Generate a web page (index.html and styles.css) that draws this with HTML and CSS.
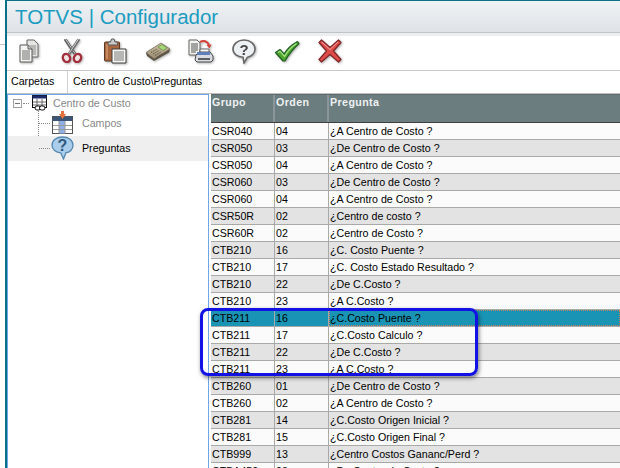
FILE: index.html
```html
<!DOCTYPE html>
<html lang="es">
<head>
<meta charset="utf-8">
<title>TOTVS | Configurador</title>
<link rel="stylesheet" href="styles.css">
</head>
<body>
<div class="desk">
  <div class="window">
    <header class="title">TOTVS | Configurador</header>
    <div class="toolbar">
      <svg class="tool" width="24" height="24" viewBox="0 0 24 24"><path d="M10 1h7l4 4v13H10z" fill="#e4e4e0" stroke="#6a6a6a"/><path d="M12 7h7M12 9h7M12 11h7M12 13h7M12 15h7" stroke="#8a8a8a"/><path d="M3 6h8l4 4v13H3z" fill="#f3f3ef" stroke="#5a5a5a"/><path d="M11 6v4h4" fill="#ccc" stroke="#5a5a5a"/><path d="M5 12h8M5 14h8M5 16h8M5 18h8M5 20h8" stroke="#6f6f6f"/></svg>
      <svg class="tool" width="24" height="24" viewBox="0 0 24 24"><path d="M5 0l10 15" stroke="#5c5c5c" stroke-width="3"/><path d="M5.500 0l9.500 14.500" stroke="#c8c8c8"/><path d="M19 0L9 15" stroke="#6a6a6a" stroke-width="3"/><path d="M18.500 0L9 14.500" stroke="#d0d0d0"/><ellipse cx="6.500" cy="19" rx="3.500" ry="4.200" fill="#f0e4e4" stroke="#a32f3c" stroke-width="2.400" transform="rotate(-25 6.500 19)"/><ellipse cx="17.500" cy="19" rx="3.500" ry="4.200" fill="#f0e4e4" stroke="#a32f3c" stroke-width="2.400" transform="rotate(25 17.500 19)"/></svg>
      <svg class="tool" width="24" height="26" viewBox="0 0 24 26"><rect x="1.500" y="4" width="15" height="19" rx="1" fill="#a9673f" stroke="#5a3823"/><path d="M3 6v15h2V6z" fill="#c58a60"/><path d="M5 5l1-1h1.500l1-3h2.500l1 3h1.500l1 1v2H5z" fill="#c9c9c9" stroke="#5a5a5a"/><path d="M9 11h14v14H9z" fill="#f7f7f3" stroke="#3f3f3f"/><path d="M11 14h10M11 16h10M11 18h10M11 20h10M11 22h10" stroke="#777"/></svg>
      <svg class="tool" width="26" height="24" viewBox="0 0 26 24"><defs><linearGradient id="cb" x1="0" y1="0" x2="0" y2="1"><stop offset="0" stop-color="#cfc4a4"/><stop offset="1" stop-color="#97886f"/></linearGradient></defs><path d="M1 14L16 5l9 6-1 2.500L9 22l-7-5z" fill="#5d5344"/><path d="M1 13.500L16 4l9 6L9 20z" fill="url(#cb)" stroke="#6b6151" stroke-width=".7"/><path d="M13 8l4-2.500 5 3.500-4 2.500z" fill="#a6d877" stroke="#5d7f44" stroke-width=".6"/><path d="M6 13.500l6-3.500M8 15l6-3.500M10 16.500l6-3.500M12 18l5-3" stroke="#5e5444" stroke-dasharray="1.500 1"/></svg>
      <svg class="tool" width="26" height="24" viewBox="0 0 26 24"><path d="M1 1h8l3 3v12H1z" fill="#f2f2ee" stroke="#666"/><path d="M3 5h7M3 7h7M3 9h7M3 11h7M3 13h5" stroke="#555"/><path d="M12 3c4-2 7-1 9 3" fill="none" stroke="#d4423a" stroke-width="2"/><path d="M18.500 6l5-.5-2 4z" fill="#d4423a"/><path d="M12 10h9v5h-9z" fill="#fff" stroke="#666"/><path d="M8 16l3-3h11l3 4v4l-2 2H9l-2-2z" fill="#d8dce2" stroke="#4a4a4a"/><path d="M9 13h13v3H9z" fill="#5f7fb8"/><path d="M10 20h12" stroke="#333" stroke-width="1.500"/></svg>
      <svg class="tool" width="24" height="25" viewBox="0 0 24 25"><path d="M12 1c6 0 11 3.800 11 9 0 4.500-3.600 7.600-7.500 8.200L12 24l-1-5.800C5.500 18 1 14.800 1 10 1 4.800 6 1 12 1z" fill="#eef1f4" stroke="#666" stroke-width="1.600"/><text class="q q-small" x="12" y="16" text-anchor="middle">?</text></svg>
      <svg class="tool" width="26" height="24" viewBox="0 0 26 24"><path d="M1.500 13.500L6 10.500l4 4.500C13 10 18 5.500 23.500 2.500l1.500 2C19 10 15 15 11 22h-2z" fill="#4ca52c" stroke="#1f5e22" stroke-linejoin="round" stroke-width="1.200"/><path d="M4 13.500l2-1.300 4.500 5.300C14 11.500 18 7.500 22.500 4.500" fill="none" stroke="#a9e58a" stroke-width="1.200"/></svg>
      <svg class="tool" width="24" height="24" viewBox="0 0 24 24"><path d="M3.500 1L12 8.500 20.500 1 23 3.500 15.500 12 23 20.500 20.500 23 12 15.500 3.500 23 1 20.500 8.500 12 1 3.500z" fill="#dd4c48" stroke="#7f2426" stroke-linejoin="round" stroke-width="1.200"/><path d="M3.800 3L12 10.500 20 3" fill="none" stroke="#f4a6a0"/></svg>
    </div>
    <div class="path-bar">
      <span class="path-label">Carpetas</span>
      <span class="path-value">Centro de Custo\Preguntas</span>
    </div>
    <div class="main">
      <nav class="tree">
        <div class="tree-root">
          <span class="expander"></span>
          <span class="dots-h"></span>
          <svg width="15" height="16" viewBox="0 0 15 16"><rect x="0.500" y="0.500" width="14" height="12" fill="#fff" stroke="#111"/><rect x="0.500" y="0.500" width="14" height="3" fill="#1d2a6c"/><path d="M1 7h13M1 10h13M5 4v8M10 4v8" stroke="#666"/><rect x="3" y="11" width="5.500" height="4" rx="2" fill="#fff" stroke="#111"/><rect x="7.500" y="11" width="5.500" height="4" rx="2" fill="#fff" stroke="#111"/></svg>
          <span class="root-label">Centro de Custo</span>
        </div>
        <div class="tree-children">
          <div class="tree-item">
            <svg class="item-icon" width="23" height="24" viewBox="0 0 23 24"><rect x="1.500" y="5.500" width="20" height="17" fill="#fff" stroke="#555"/><rect x="1.500" y="5.500" width="20" height="4.500" fill="#3d5575"/><rect x="8" y="10" width="6" height="12.500" fill="#8fb0e6"/><path d="M2 14.500h19M2 18.500h19M8 10v12M14 10v12" stroke="#9a9a9a"/><path d="M8 3h2V0h3v3h2l-3.500 5z" fill="#e8703a"/></svg>
            <span class="item-label">Campos</span>
          </div>
          <div class="tree-item selected">
            <svg class="item-icon" width="23" height="24" viewBox="0 0 23 24"><path d="M11.500 1C17.500 1 22 4.300 22 9.300c0 4.200-3.300 7-7 7.400L12.500 23l-2.800-6.200C5 16.500 1 13.600 1 9.300 1 4.300 5.500 1 11.500 1z" fill="#a9cdea" stroke="#5588b0" stroke-width="1.300"/><text class="q q-big" x="11.500" y="15" text-anchor="middle">?</text></svg>
            <span class="item-label strong">Preguntas</span>
          </div>
        </div>
      </nav>
      <div class="grid">
        <div class="row head"><span class="c1">Grupo</span><span class="c2">Orden</span><span class="c3">Pregunta</span></div>
        <div class="row"><span class="c1">CSR040</span><span class="c2">04</span><span class="c3">¿A Centro de Costo ?</span></div>
        <div class="row alt"><span class="c1">CSR050</span><span class="c2">03</span><span class="c3">¿De Centro de Costo ?</span></div>
        <div class="row"><span class="c1">CSR050</span><span class="c2">04</span><span class="c3">¿A Centro de Costo ?</span></div>
        <div class="row alt"><span class="c1">CSR060</span><span class="c2">03</span><span class="c3">¿De Centro de Costo ?</span></div>
        <div class="row"><span class="c1">CSR060</span><span class="c2">04</span><span class="c3">¿A Centro de Costo ?</span></div>
        <div class="row alt"><span class="c1">CSR50R</span><span class="c2">02</span><span class="c3">¿Centro de costo ?</span></div>
        <div class="row"><span class="c1">CSR60R</span><span class="c2">02</span><span class="c3">¿Centro de Costo ?</span></div>
        <div class="row alt"><span class="c1">CTB210</span><span class="c2">16</span><span class="c3">¿C. Costo Puente ?</span></div>
        <div class="row"><span class="c1">CTB210</span><span class="c2">17</span><span class="c3">¿C. Costo Estado Resultado ?</span></div>
        <div class="row alt"><span class="c1">CTB210</span><span class="c2">22</span><span class="c3">¿De C.Costo ?</span></div>
        <div class="row"><span class="c1">CTB210</span><span class="c2">23</span><span class="c3">¿A C.Costo ?</span></div>
        <div class="row active"><span class="c1">CTB211</span><span class="c2">16</span><span class="c3">¿C.Costo Puente ?</span></div>
        <div class="row"><span class="c1">CTB211</span><span class="c2">17</span><span class="c3">¿C.Costo Calculo ?</span></div>
        <div class="row alt"><span class="c1">CTB211</span><span class="c2">22</span><span class="c3">¿De C.Costo ?</span></div>
        <div class="row"><span class="c1">CTB211</span><span class="c2">23</span><span class="c3">¿A C.Costo ?</span></div>
        <div class="row alt"><span class="c1">CTB260</span><span class="c2">01</span><span class="c3">¿De Centro de Costo ?</span></div>
        <div class="row"><span class="c1">CTB260</span><span class="c2">02</span><span class="c3">¿A Centro de Costo ?</span></div>
        <div class="row alt"><span class="c1">CTB281</span><span class="c2">14</span><span class="c3">¿C.Costo Origen Inicial ?</span></div>
        <div class="row"><span class="c1">CTB281</span><span class="c2">15</span><span class="c3">¿C.Costo Origen Final ?</span></div>
        <div class="row alt"><span class="c1">CTB999</span><span class="c2">13</span><span class="c3">¿Centro Costos Gananc/Perd ?</span></div>
        <div class="row"><span class="c1">CTBA450</span><span class="c2">03</span><span class="c3">¿De Centro de Costo ?</span></div>
      </div>
      <div class="highlight"></div>
    </div>
  </div>
</div>
</body>
</html>
```
FILE: styles.css
```css
html, body { margin: 0; padding: 0; }
* { box-sizing: border-box; }
body { width: 620px; height: 468px; overflow: hidden; background: #fff; font-family: "Liberation Sans", Arial, sans-serif; }
.desk { height: 468px; padding-left: 5px; overflow: hidden; background: linear-gradient(#c4c4c4, #c4c4c4) 0 44px / 5px 1px no-repeat, #fff; }
.window { height: 100%; background: #fff; display: flex; flex-direction: column; border-left: 2px solid #0a6f87; border-top: 1px solid #0a6f87; }
.title { height: 32px; flex: none; padding-left: 8px; font-size: 20.5px; line-height: 31px; color: #1b9cc0; background: linear-gradient(#eff2f4, #dfe3e8); border-bottom: 1px solid #c0c4c7; }
.toolbar { height: 38px; flex: none; display: grid; grid-template-columns: repeat(8, 43px); align-items: center; justify-items: center; padding-bottom: 4px; border-top: 3px solid #eceeef; border-bottom: 1px solid #c8c8c8; }
.tool { display: block; filter: drop-shadow(1px 1px 1px rgba(0,0,0,.3)); }
.q { font-family: "Liberation Sans", Arial, sans-serif; font-weight: 700; }
.q-small { font-size: 15px; fill: #444; }
.q-big { font-size: 16px; fill: #2f5a80; }
.path-bar { height: 23px; flex: none; display: flex; border-bottom: 1px solid #c0c0c0; font-size: 10.67px; color: #000; }
.path-label { width: 60px; flex: none; padding: 4px 0 0 4px; }
.path-value { flex: 1; padding: 4px 0 0 5px; border-left: 1px solid #d0d0d0; }
.main { flex: 1; display: flex; min-height: 0; position: relative; }
.tree { width: 202px; flex: none; border: 1px solid #6ea6e8; border-bottom: 0; background: #fff; font-size: 10.67px; }
.tree-root { display: flex; align-items: center; height: 16px; padding-left: 5px; color: #888; }
.expander { width: 9px; height: 9px; flex: none; border: 1px solid #a0a0a0; background: linear-gradient(#777, #777) center / 5px 1px no-repeat; }
.dots-h { width: 6px; border-top: 1px dotted #888; margin: 0 3px 0 1px; }
.root-label { margin-left: 6px; }
.tree-children { position: relative; }
.tree-children::before { content: ""; position: absolute; left: 30px; top: 0; height: 37px; border-left: 1px dotted #888; }
.tree-item { position: relative; display: flex; align-items: center; gap: 8px; height: 25px; padding: 0 0 2px 43px; }
.tree-item::before { content: ""; position: absolute; left: 31px; top: 12px; width: 11px; border-top: 1px dotted #888; }
.item-icon { flex: none; position: relative; }
.item-label { color: #888; }
.item-label.strong { color: #000; }
.selected { background: #efefef; }
.grid { flex: 1; min-width: 0; overflow: hidden; background: #fff; padding-left: 2px; }
.row { display: grid; grid-template-columns: 64px 54px 1fr; height: 17px; font-size: 10.67px; line-height: 16px; color: #000; background: #fbfbfb; border-bottom: 1px solid #a9a9a9; }
.row span { padding-left: 1px; border-right: 1px solid #a9a9a9; white-space: nowrap; }
.row .c3 { border-right: 0; }
.row.alt { background: #e3e3e3; }
.row.active { background: #1a94b4; }
.row.active .c3 { outline: 1px dotted #c97f5c; outline-offset: -1px; }
.row.head { height: 29px; background: #6c7d80; color: #eef1f1; font-weight: 700; letter-spacing: 0.4px; line-height: 15px; border-top: 1px solid #5e6b6d; border-bottom: 1px solid #3f3f3f; }
.row.head span { border-right: 2px solid #8a9699; }
.row.head .c3 { border-right: 0; }
.highlight { position: absolute; left: 193px; top: 214px; width: 278px; height: 68px; border: 3px solid #1212e4; border-radius: 8px; box-shadow: 1px 2px 4px rgba(0,0,0,.5); pointer-events: none; }
```
